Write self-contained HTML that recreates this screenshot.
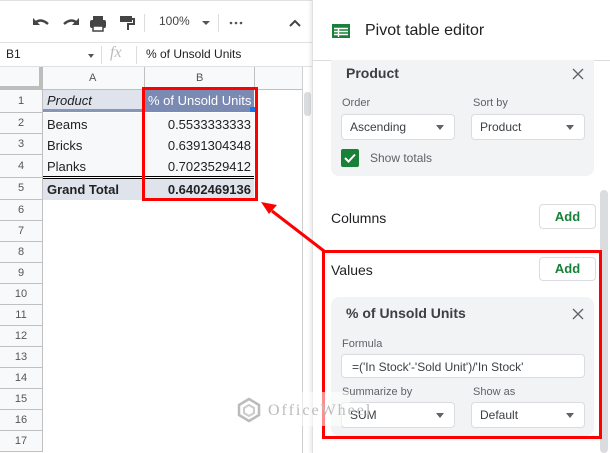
<!DOCTYPE html>
<html><head><meta charset="utf-8"><style>
*{margin:0;padding:0;box-sizing:border-box}
body{width:610px;height:453px;overflow:hidden;background:#fff;font-family:"Liberation Sans",Arial,sans-serif;position:relative;color:#222}
.a{position:absolute}
.rh{position:absolute;left:0;width:43px;background:#f8f9fa;border-bottom:1px solid #c0c0c0;border-right:1px solid #c0c0c0;text-align:center;font-size:11px;color:#555}
.cell{position:absolute;font-size:13px;white-space:nowrap}
.lbl{position:absolute;font-size:11px;color:#5f6368}
.sel{position:absolute;background:#fff;border:1px solid #dadce0;border-radius:4px;font-size:12px;color:#3c4043;padding-left:8px;display:flex;align-items:center}
.sel:after{content:"";position:absolute;right:10px;top:50%;margin-top:-2px;border-left:4px solid transparent;border-right:4px solid transparent;border-top:5px solid #5f6368}
.add{position:absolute;border:1px solid #dadce0;border-radius:4px;color:#188038;font-size:13px;font-weight:bold;text-align:center;background:#fff}
</style></head><body>
<div class="a" style="left:0;top:0;width:312px;height:43px;border-top:1px solid #e0e0e0;border-bottom:1px solid #e0e0e0;background:#fff"></div>
<svg class="a" style="left:30px;top:12px" width="280" height="22">
<path d="M4 12 q6-7 14 0" stroke="#444" stroke-width="2.4" fill="none"/><path d="M3 6v7h7z" fill="#444"/>
<path d="M48 12 q-6-7-14 0" stroke="#444" stroke-width="2.4" fill="none"/><path d="M49 6v7h-7z" fill="#444"/>
<rect x="60" y="8" width="16" height="8" rx="2" fill="#444"/><rect x="63" y="4" width="10" height="4" fill="#444"/><rect x="63" y="14" width="10" height="5" fill="#fff" stroke="#444" stroke-width="1.5"/>
<rect x="90" y="4" width="12" height="6" fill="#444"/><path d="M102 7h2v5h-6v6" stroke="#444" stroke-width="2" fill="none"/>
<rect x="114" y="2" width="1" height="18" fill="#ddd"/>
<rect x="188" y="2" width="1" height="18" fill="#ddd"/>
<path d="M172 9h8l-4 4z" fill="#555"/>
<circle cx="201" cy="11" r="1.3" fill="#555"/><circle cx="206" cy="11" r="1.3" fill="#555"/><circle cx="211" cy="11" r="1.3" fill="#555"/>
<path d="M260 14l5-5 5 5" stroke="#444" stroke-width="2" fill="none"/>
</svg>
<div class="a" style="left:159px;top:14px;font-size:12px;color:#444">100%</div>
<div class="a" style="left:0;top:43px;width:312px;height:24px;border-bottom:1px solid #e0e0e0"></div>
<div class="a" style="left:6px;top:47px;font-size:12px">B1</div>
<div class="a" style="left:88px;top:54px;border-left:3px solid transparent;border-right:3px solid transparent;border-top:4px solid #555"></div>
<div class="a" style="left:101px;top:46px;width:1px;height:18px;background:#ddd"></div>
<div class="a" style="left:110px;top:44px;font-size:16px;font-style:italic;color:#bbb;font-family:'Liberation Serif',serif">fx</div>
<div class="a" style="left:136px;top:46px;width:1px;height:18px;background:#ddd"></div>
<div class="a" style="left:146px;top:47px;font-size:12px;color:#222">% of Unsold Units</div>
<div class="a" style="left:0;top:67px;width:302px;height:23px;background:#f8f9fa;border-bottom:1px solid #c0c0c0"></div>
<div class="a" style="left:0;top:67px;width:43px;height:23px;border-right:4px solid #bdbdbd;border-bottom:4px solid #bdbdbd;background:#f8f9fa"></div>
<div class="a" style="left:144px;top:67px;width:1px;height:23px;background:#c0c0c0"></div>
<div class="a" style="left:254px;top:67px;width:1px;height:23px;background:#c0c0c0"></div>
<div class="a" style="left:89px;top:72px;font-size:11px;color:#555">A</div>
<div class="a" style="left:196px;top:72px;font-size:11px;color:#555">B</div>
<div class="rh" style="top:90px;height:23px;line-height:22px">1</div>
<div class="rh" style="top:113px;height:21px;line-height:20px">2</div>
<div class="rh" style="top:134px;height:21px;line-height:20px">3</div>
<div class="rh" style="top:155px;height:23px;line-height:22px">4</div>
<div class="rh" style="top:178px;height:22px;line-height:21px">5</div>
<div class="rh" style="top:200px;height:21px;line-height:20px">6</div>
<div class="rh" style="top:221px;height:21px;line-height:20px">7</div>
<div class="rh" style="top:242px;height:21px;line-height:20px">8</div>
<div class="rh" style="top:263px;height:21px;line-height:20px">9</div>
<div class="rh" style="top:284px;height:21px;line-height:20px">10</div>
<div class="rh" style="top:305px;height:21px;line-height:20px">11</div>
<div class="rh" style="top:326px;height:21px;line-height:20px">12</div>
<div class="rh" style="top:347px;height:21px;line-height:20px">13</div>
<div class="rh" style="top:368px;height:21px;line-height:20px">14</div>
<div class="rh" style="top:389px;height:21px;line-height:20px">15</div>
<div class="rh" style="top:410px;height:21px;line-height:20px">16</div>
<div class="rh" style="top:431px;height:21px;line-height:20px">17</div>
<div class="a" style="left:43px;top:90px;width:211px;height:22px;background:#dfe3ec;border-bottom:3px solid #8596b8"></div>
<div class="a" style="left:145px;top:90px;width:109px;height:22px;background:#7b8ab3"></div>
<div class="a" style="left:43px;top:113px;width:211px;height:63px;background:#f7f8fa"></div>
<div class="a" style="left:43px;top:176px;width:211px;height:3px;border-top:1px solid #000;border-bottom:1px solid #000"></div>
<div class="a" style="left:43px;top:179px;width:211px;height:21px;background:#dfe3ec"></div>
<div class="a" style="left:302px;top:67px;width:1px;height:386px;background:#d0d0d0"></div>
<div class="a" style="left:304px;top:92px;width:7px;height:24px;background:#dadce0;border-radius:3px"></div>
<div class="cell" style="left:47px;top:93px;font-style:italic">Product</div>
<div class="cell" style="left:148px;top:93px;color:#fff">% of Unsold Units</div>
<div class="a" style="left:250px;top:107px;width:5px;height:5px;background:#1a73e8"></div>
<div class="cell" style="left:47px;top:117px">Beams</div>
<div class="cell" style="left:47px;top:138px">Bricks</div>
<div class="cell" style="left:47px;top:159px">Planks</div>
<div class="cell" style="left:47px;top:182px;font-weight:bold">Grand Total</div>
<div class="cell" style="left:145px;width:106px;text-align:right;top:117px">0.5533333333</div>
<div class="cell" style="left:145px;width:106px;text-align:right;top:138px">0.6391304348</div>
<div class="cell" style="left:145px;width:106px;text-align:right;top:159px">0.7023529412</div>
<div class="cell" style="left:145px;width:106px;text-align:right;top:182px;font-weight:bold">0.6402469136</div>
<div class="a" style="left:142px;top:87px;width:116px;height:114px;border:3px solid #f00"></div>
<div class="a" style="left:312px;top:0;width:298px;height:453px;background:#fff;border-left:1px solid #e0e0e0;box-shadow:-2px 0 3px rgba(0,0,0,.08)"></div>
<div class="a" style="left:312px;top:60px;width:298px;height:1px;background:#dadce0"></div>
<svg class="a" style="left:332px;top:24px" width="18" height="14"><rect width="18" height="14" fill="#188038"/><path d="M2 4.5h14M2 7.5h14M2 10.5h14M6.5 4v9" stroke="#fff" stroke-width="1.4"/></svg>
<div class="a" style="left:365px;top:22px;font-size:16px;color:#202124">Pivot table editor</div>
<div class="a" style="left:331px;top:60px;width:263px;height:116px;background:#f1f3f4;border-radius:0 0 8px 8px"></div>
<div class="a" style="left:346px;top:65px;font-size:14px;font-weight:bold;color:#3c4043">Product</div>
<svg class="a" style="left:572px;top:68px" width="12" height="12"><path d="M1 1l10 10M11 1L1 11" stroke="#5f6368" stroke-width="1.3"/></svg>
<div class="lbl" style="left:342px;top:97px">Order</div>
<div class="lbl" style="left:473px;top:97px">Sort by</div>
<div class="sel" style="left:341px;top:114px;width:114px;height:26px">Ascending</div>
<div class="sel" style="left:471px;top:114px;width:114px;height:26px">Product</div>
<div class="a" style="left:341px;top:149px;width:18px;height:18px;background:#188038;border-radius:2px"></div>
<svg class="a" style="left:341px;top:149px" width="18" height="18"><path d="M4 9l3.5 3.5L14 5.5" stroke="#fff" stroke-width="2" fill="none"/></svg>
<div class="a" style="left:370px;top:151px;font-size:12px;color:#5f6368">Show totals</div>
<div class="a" style="left:600px;top:190px;width:8px;height:263px;background:#dadce0;border-radius:4px"></div>
<div class="a" style="left:331px;top:210px;font-size:14px;color:#202124">Columns</div>
<div class="add" style="left:539px;top:204px;width:57px;height:25px;line-height:23px">Add</div>
<div class="a" style="left:331px;top:262px;font-size:14px;color:#202124">Values</div>
<div class="add" style="left:539px;top:257px;width:57px;height:24px;line-height:22px">Add</div>
<div class="a" style="left:331px;top:297px;width:263px;height:139px;background:#f1f3f4;border-radius:8px"></div>
<div class="a" style="left:346px;top:305px;font-size:14px;font-weight:bold;color:#3c4043">% of Unsold Units</div>
<svg class="a" style="left:572px;top:308px" width="12" height="12"><path d="M1 1l10 10M11 1L1 11" stroke="#5f6368" stroke-width="1.3"/></svg>
<div class="lbl" style="left:342px;top:338px">Formula</div>
<div class="a" style="left:341px;top:354px;width:244px;height:24px;background:#fff;border:1px solid #dadce0;border-radius:4px;font-size:12px;color:#3c4043;padding:5px 0 0 10px">=('In Stock'-'Sold Unit')/'In Stock'</div>
<div class="lbl" style="left:342px;top:386px">Summarize by</div>
<div class="lbl" style="left:473px;top:386px">Show as</div>
<div class="sel" style="left:341px;top:402px;width:114px;height:26px">SUM</div>
<div class="sel" style="left:471px;top:402px;width:114px;height:26px">Default</div>
<div class="a" style="left:322px;top:250px;width:280px;height:189px;border:3px solid #f00"></div>
<svg class="a" style="left:0;top:0" width="610" height="453"><line x1="324" y1="251" x2="272" y2="211" stroke="#f00" stroke-width="3"/><path d="M261 202l16 3-8 9z" fill="#f00"/></svg>
<div class="a" style="left:230px;top:392px;width:120px;height:34px;background:rgba(255,255,255,.55)"></div>
<svg class="a" style="left:236px;top:397px" width="26" height="26"><path d="M13 2l10 6v10l-10 6-10-6V8z" fill="none" stroke="#bbb" stroke-width="2.5"/><path d="M13 8l5 3v5l-5 3-5-3v-5z" fill="none" stroke="#ccc" stroke-width="2"/></svg>
<div class="a" style="left:268px;top:402px;font-size:16px;color:#bbb;letter-spacing:2px;font-family:'Liberation Serif',serif">OfficeWheel</div>
</body></html>
